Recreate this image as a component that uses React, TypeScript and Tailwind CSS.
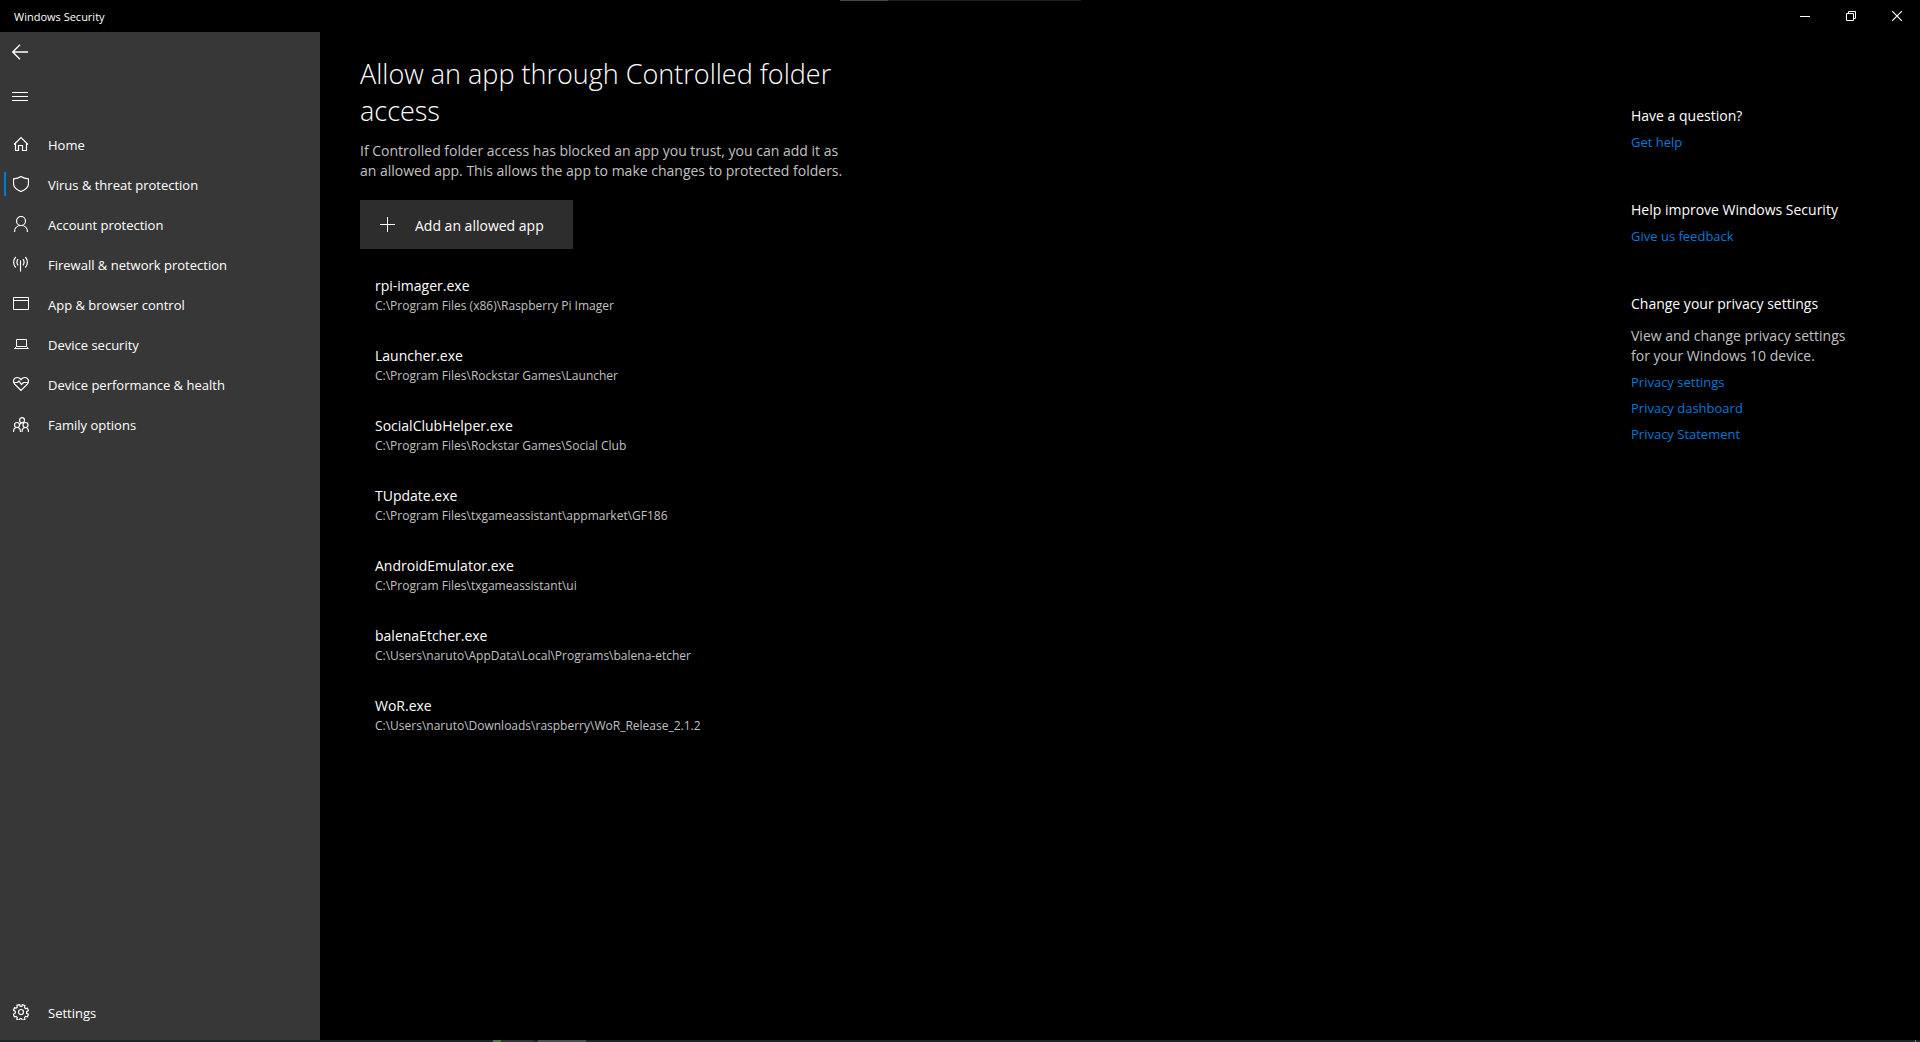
import React, { useState } from 'react';

type IconProps = { children: React.ReactNode; size?: number; stroke?: number };

// Thin line icons, drawn at their own pixel size
const LineIcon: React.FC<IconProps> = ({ children, size = 16, stroke = 1 }) => (
    <svg width={size} height={size} viewBox={`0 0 ${size} ${size}`} fill="none" stroke="currentColor" strokeWidth={stroke} className="shrink-0" aria-hidden="true">
        {children}
    </svg>
);

const navItems = [
    { name: 'Home', stroke: 1.2, icon: <path d="M1 8.5 8 1.5l7 7M2.500 7.200v7.300h3v-5h4v5h4V7.200" /> },
    { name: 'Virus & threat protection', stroke: 1.2, icon: <path d="M8 .6c2 1.500 4.500 2.200 7.500 2.200v4.700c0 3.500-3 6.200-7.500 8-4.500-1.800-7.500-4.500-7.500-8V2.800C3.500 2.800 6 2.100 8 .6Z" /> },
    { name: 'Account protection', stroke: 1.2, icon: <><circle cx="8" cy="5" r="4.500" /><path d="M1.500 16c0-3.600 2.300-6.500 6.500-6.500s6.500 2.900 6.500 6.500" /></> },
    { name: 'Firewall & network protection', stroke: 1.2, icon: <path d="M7.500 4.500V15.500M5 3.200c-1.300 1.800-1.300 4.300 0 6.100M10 3.200c1.300 1.800 1.300 4.300 0 6.100M2.700 1C-.1 4-.1 8.500 2.700 11.500M12.300 1c2.800 3 2.800 7.500 0 10.500" /> },
    { name: 'App & browser control', stroke: 1, icon: <path d="M.5 1.500h15v12H.5zM.5 4.500h15" /> },
    { name: 'Device security', stroke: 1, icon: <path d="M3.500 3.500h10v7h-10zM3.500 10.500l-2 2h14l-2-2" /> },
    { name: 'Device performance & health', stroke: 1.2, icon: <path d="M8 14.500 1.700 8.200C-.9 4.700 1.200 1.500 4.200 1.500c1.600 0 2.800.8 3.800 2 1-1.200 2.200-2 3.800-2 3 0 5.100 3.200 2.500 6.700L8 14.500ZM1.500 6.500h3L6 5l2.500 3.500 2-2h4" /> },
    { name: 'Family options', stroke: 1.2, icon: <><circle cx="9" cy="4.200" r="2.500" /><circle cx="4" cy="9" r="2.500" /><circle cx="12.500" cy="9" r="2.500" /><path d="M.5 16c0-2.800 1.500-4.500 3.500-4.500s3.500 1.700 3.500 4.500M9 16c0-2.800 1.500-4.500 3.500-4.500s3 1.700 3 4.500M6.500 9C7 7.300 8 6.700 9 6.700s1 .1 1.500.6" /></> },
];

const allowedApps = [
    { name: 'rpi-imager.exe', path: 'C:\\Program Files (x86)\\Raspberry Pi Imager' },
    { name: 'Launcher.exe', path: 'C:\\Program Files\\Rockstar Games\\Launcher' },
    { name: 'SocialClubHelper.exe', path: 'C:\\Program Files\\Rockstar Games\\Social Club' },
    { name: 'TUpdate.exe', path: 'C:\\Program Files\\txgameassistant\\appmarket\\GF186' },
    { name: 'AndroidEmulator.exe', path: 'C:\\Program Files\\txgameassistant\\ui' },
    { name: 'balenaEtcher.exe', path: 'C:\\Users\\naruto\\AppData\\Local\\Programs\\balena-etcher' },
    { name: 'WoR.exe', path: 'C:\\Users\\naruto\\Downloads\\raspberry\\WoR_Release_2.1.2' },
];

const TitleBar: React.FC = () => (
    <header className="flex h-8 shrink-0 items-center justify-between">
        <span className="pt-0.5 pl-3.5 text-[11px] leading-4">Windows Security</span>
        <div className="flex h-full">
            <button aria-label="Minimize" className="flex w-[46px] items-center justify-center hover:bg-[#2b2b2b]">
                <LineIcon size={10}><path d="M0 5.500h10" /></LineIcon>
            </button>
            <button aria-label="Restore" className="flex w-[46px] items-center justify-center hover:bg-[#2b2b2b]">
                <LineIcon size={10}><path d="M.5 2.500h7v7h-7zM2.500 2.500v-2h7v7h-2" /></LineIcon>
            </button>
            <button aria-label="Close" className="flex w-[46px] items-center justify-center hover:bg-red-600">
                <LineIcon size={10} stroke={1.2}><path d="m0 0 10 10M10 0 0 10" /></LineIcon>
            </button>
        </div>
    </header>
);

const Sidebar: React.FC = () => {
    const [active, setActive] = useState('Virus & threat protection');

    return (
        <aside className="flex w-80 shrink-0 flex-col bg-[#373737] pb-2">
            <button aria-label="Back" className="flex h-10 w-10 items-center justify-center">
                <LineIcon stroke={1.4}><path d="M.5 8H16M8 .7.700 8 8 15.300" /></LineIcon>
            </button>
            <button aria-label="Menu" className="flex h-12 w-10 items-center justify-center">
                <LineIcon><path d="M0 4.500h16M0 8.500h16M0 12.500h16" /></LineIcon>
            </button>
            <nav className="mt-1 flex flex-col">
                {navItems.map(item => (
                    <button key={item.name} onClick={() => setActive(item.name)} className="flex h-10 items-center pl-1 text-left hover:bg-white/10">
                        <span className={`mr-[7px] h-6 w-0.5 ${active === item.name ? 'bg-[#0078d7]' : ''}`} />
                        <LineIcon stroke={item.stroke}>{item.icon}</LineIcon>
                        <span className="ml-[19px] pt-0.5 text-[13px] leading-5">{item.name}</span>
                    </button>
                ))}
            </nav>
            <button className="mt-auto flex h-10 items-center pl-[13px] text-left hover:bg-white/10">
                <LineIcon stroke={1.2}>
                    <circle cx="8" cy="8" r="2.500" />
                    <path d="m6.700.6.500 1.900h1.600L9.300.6l2.600 1-.4 2 1 1 1.900-.4 1 2.500-1.800 1v1.600l1.800 1-1 2.500-1.900-.4-1 1 .4 1.900-2.600 1-.9-1.800H7.100l-.8 1.800-2.500-1 .4-1.900-1-1-1.900.4-1-2.600 1.900-1V7.200L.4 6.300l1-2.500 1.900.4 1-1-.4-1.900 2.800-.7Z" />
                </LineIcon>
                <span className="ml-[19px] pt-0.5 text-[13px] leading-5">Settings</span>
            </button>
        </aside>
    );
};

const SideLink: React.FC<{ children: React.ReactNode }> = ({ children }) => (
    <a href="#" className="block w-fit text-[13px] leading-[26px] text-[#0078d7] hover:text-gray-400">{children}</a>
);

const HelpPanel: React.FC = () => (
    <aside className="w-[289px] shrink-0 pt-[74px] text-[14px] leading-5">
        <section>
            <h2 className="pb-[3px]">Have a question?</h2>
            <SideLink>Get help</SideLink>
        </section>
        <section className="mt-[45px]">
            <h2 className="pb-[3px]">Help improve Windows Security</h2>
            <SideLink>Give us feedback</SideLink>
        </section>
        <section className="mt-[45px]">
            <h2>Change your privacy settings</h2>
            <p className="w-[230px] pt-3 pb-[3px] text-[#c2c2c2]">View and change privacy settings for your Windows 10 device.</p>
            <SideLink>Privacy settings</SideLink>
            <SideLink>Privacy dashboard</SideLink>
            <SideLink>Privacy Statement</SideLink>
        </section>
    </aside>
);

const App: React.FC = () => (
    <div className="relative flex min-h-screen flex-col bg-black font-['Open_Sans','Noto_Sans',sans-serif] text-white">
        {/* Window edge along the top */}
        <div className="absolute top-0 left-[840px] flex h-px w-[241px] bg-[#202020]">
            <div className="w-12 bg-[#484848]" />
        </div>
        <TitleBar />
        <div className="flex grow">
            <Sidebar />
            <main className="grow pl-10">
                <h1 className="w-[490px] pt-[23px] text-[27px] leading-[37px] font-light">Allow an app through Controlled folder access</h1>
                <p className="mt-3 w-[490px] text-[14px] leading-5 text-[#c2c2c2]">
                    If Controlled folder access has blocked an app you trust, you can add it as an allowed app. This allows the app to make changes to protected folders.
                </p>
                <button className="mt-[19px] flex h-[49px] w-[213px] items-center bg-[#2d2d2d] pl-5 text-[14px] leading-5 hover:bg-[#3a3a3a]">
                    <LineIcon size={15}><path d="M7.500 0v15M0 7.500h15" /></LineIcon>
                    <span className="ml-5 pt-0.5">Add an allowed app</span>
                </button>
                <ul className="mt-[27px] flex flex-col gap-[30px] pl-[15px]">
                    {allowedApps.map(app => (
                        <li key={app.name}>
                            <div className="text-[14px] leading-5">{app.name}</div>
                            <div className="text-[12px] leading-5 text-[#c2c2c2]">{app.path}</div>
                        </li>
                    ))}
                </ul>
            </main>
            <HelpPanel />
        </div>
        {/* Top edge of the taskbar */}
        <footer className="flex h-0.5 shrink-0 bg-[#17272c] pr-1 pl-[493px]">
            <div className="w-2 bg-[#3f7f45]" />
            <div className="w-8 bg-[#2b373b]" />
            <div className="ml-[5px] w-12 bg-[#455054]" />
            <div className="ml-auto w-px bg-[#7d8688]" />
        </footer>
    </div>
);

export default App;
